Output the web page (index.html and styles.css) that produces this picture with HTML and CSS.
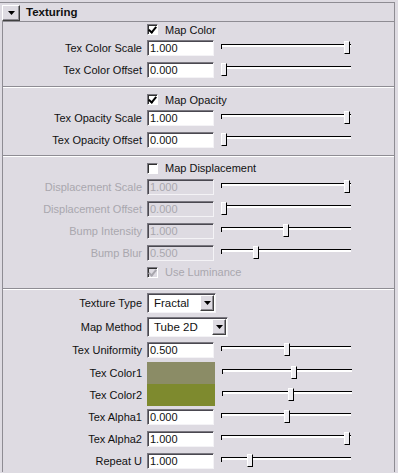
FILE: index.html
```html
<!DOCTYPE html>
<html>
<head>
    <title>Texturing</title>
    <link rel="stylesheet" href="styles.css">
</head>
<body>
    <div class="panel">
        <div class="header">
            <span class="toggle"><svg width="7" height="4" viewBox="0 0 7 4"><path d="M0 0H7L3.5 4Z" fill="#000"/></svg></span>
            <span class="title">Texturing</span>
        </div>

        <div class="frame">
            <div class="group g1">
                <div class="check-row">
                    <span class="check on"></span><span>Map Color</span>
                </div>
                <div class="row">
                    <label>Tex Color Scale</label>
                    <span class="field">1.000</span>
                    <span class="slider"><i class="thumb" style="left: 123px"></i></span>
                </div>
                <div class="row">
                    <label>Tex Color Offset</label>
                    <span class="field">0.000</span>
                    <span class="slider"><i class="thumb" style="left: 0px"></i></span>
                </div>
            </div>

            <div class="group g2">
                <div class="check-row">
                    <span class="check on"></span><span>Map Opacity</span>
                </div>
                <div class="row">
                    <label>Tex Opacity Scale</label>
                    <span class="field">1.000</span>
                    <span class="slider"><i class="thumb" style="left: 123px"></i></span>
                </div>
                <div class="row">
                    <label>Tex Opacity Offset</label>
                    <span class="field">0.000</span>
                    <span class="slider"><i class="thumb" style="left: 0px"></i></span>
                </div>
            </div>

            <div class="group g3">
                <div class="check-row tall">
                    <span class="check"></span><span>Map Displacement</span>
                </div>
                <div class="row off">
                    <label>Displacement Scale</label>
                    <span class="field">1.000</span>
                    <span class="slider"><i class="thumb" style="left: 123px"></i></span>
                </div>
                <div class="row off">
                    <label>Displacement Offset</label>
                    <span class="field">0.000</span>
                    <span class="slider"><i class="thumb" style="left: 0px"></i></span>
                </div>
                <div class="row off">
                    <label>Bump Intensity</label>
                    <span class="field">1.000</span>
                    <span class="slider"><i class="thumb" style="left: 62px"></i></span>
                </div>
                <div class="row off">
                    <label>Bump Blur</label>
                    <span class="field">0.500</span>
                    <span class="slider"><i class="thumb" style="left: 32px"></i></span>
                </div>
                <div class="check-row tall off">
                    <span class="check on"></span><span>Use Luminance</span>
                </div>
            </div>

            <div class="group g4">
                <div class="row h24">
                    <label>Texture Type</label>
                    <span class="select"><span>Fractal</span><span class="arrow"><svg width="7" height="4" viewBox="0 0 7 4"><path d="M0 0H7L3.5 4Z" fill="#000"/></svg></span></span>
                </div>
                <div class="row h23">
                    <label>Map Method</label>
                    <span class="select wide"><span>Tube 2D</span><span class="arrow"><svg width="7" height="4" viewBox="0 0 7 4"><path d="M0 0H7L3.5 4Z" fill="#000"/></svg></span></span>
                </div>
                <div class="row h23">
                    <label>Tex Uniformity</label>
                    <span class="field">0.500</span>
                    <span class="slider"><i class="thumb" style="left: 63px"></i></span>
                </div>
                <div class="row h23">
                    <label>Tex Color1</label>
                    <span class="swatch" style="background: #8b8c66"></span>
                    <span class="slider"><i class="thumb" style="left: 69px"></i></span>
                </div>
                <div class="row">
                    <label>Tex Color2</label>
                    <span class="swatch" style="background: #7e8a2e"></span>
                    <span class="slider"><i class="thumb" style="left: 66px"></i></span>
                </div>
                <div class="row">
                    <label>Tex Alpha1</label>
                    <span class="field">0.000</span>
                    <span class="slider"><i class="thumb" style="left: 63px"></i></span>
                </div>
                <div class="row">
                    <label>Tex Alpha2</label>
                    <span class="field">1.000</span>
                    <span class="slider"><i class="thumb" style="left: 123px"></i></span>
                </div>
                <div class="row">
                    <label>Repeat U</label>
                    <span class="field">1.000</span>
                    <span class="slider"><i class="thumb" style="left: 26px"></i></span>
                </div>
            </div>
        </div>
    </div>
</body>
</html>
```

FILE: styles.css
```css
body {
    margin: 0;
    background-color: #dedbe2;
    font-family: "Liberation Sans", Arial, sans-serif;
    font-size: 11px;
    color: #111;
    overflow: hidden;
}

.panel {
    margin-top: 2px;
    width: 394px;
    border-top: 1px solid #8e8c93;
    border-right: 1px solid #8e8c93;
}

.header {
    height: 18px;
    display: flex;
    align-items: center;
    padding-left: 2px;
}

.toggle {
    width: 16px;
    height: 14px;
    margin-top: 2px;
    display: flex;
    align-items: center;
    justify-content: center;
    border: 1px solid;
    border-color: #fff #404040 #404040 #fff;
    box-shadow: inset -1px -1px #8e8c93;
}

.title {
    margin-left: 6px;
    font-size: 11.5px;
    font-weight: bold;
}

.frame {
    margin-left: 2px;
    border-top: 1px solid #8e8c93;
    border-left: 1px solid #8e8c93;
}

.group {
    border-bottom: 1px solid #8e8c93;
    box-shadow: 0 1px #fff;
    margin-bottom: 1px;
}

.g1 { padding: 0 0 5px; }
.g2 { padding: 4px 0 4px; }
.g3 { padding: 3px 0 8px; }
.g4 { padding: 1px 0 0; border-bottom: none; box-shadow: none; }

.check-row {
    height: 15px;
    display: flex;
    align-items: center;
    padding-left: 144px;
}

.check-row.tall {
    height: 16px;
}

.check {
    width: 9px;
    height: 9px;
    margin-right: 7px;
    background: #fff;
    border: 1px solid;
    border-color: #7a7880 #fff #fff #7a7880;
    box-shadow: inset 1px 1px #303030;
    position: relative;
}

.check.on::after {
    content: '';
    position: absolute;
    left: 2px;
    top: 0px;
    width: 3px;
    height: 6px;
    border: solid #000;
    border-width: 0 2px 2px 0;
    transform: rotate(40deg);
}

.row {
    height: 22px;
    display: flex;
    align-items: center;
}

.row.h23 { height: 23px; }
.row.h24 { height: 24px; }

.row label {
    width: 139px;
    margin-right: 5px;
    text-align: right;
    white-space: nowrap;
}

.field {
    width: 63px;
    height: 14px;
    line-height: 14px;
    padding-left: 2px;
    background: #fff;
    border: 1px solid;
    border-color: #7a7880 #f4f3f6 #f4f3f6 #7a7880;
    box-shadow: inset 1px 1px #4a4850;
}

.swatch {
    width: 68px;
    height: 22px;
}

.slider {
    position: relative;
    width: 130px;
    height: 14px;
    margin-left: 7px;
}

.slider::before {
    content: '';
    position: absolute;
    left: 0;
    right: 0;
    top: 3px;
    height: 1px;
    background: #000;
    border-bottom: 2px solid #fff;
}

.slider::after {
    content: '';
    position: absolute;
    left: 0;
    top: 3px;
    width: 1px;
    height: 5px;
    background: #000;
}

.thumb {
    position: absolute;
    top: 0;
    width: 4px;
    height: 11px;
    background: #eeedf1;
    border: 1px solid;
    border-color: #fff #000 #000 #fff;
    z-index: 1;
}

.off {
    color: #a9a7ae;
}

.off .field {
    background: #dedbe2;
    color: #a9a7ae;
}

.off .check {
    background: #dedbe2;
}

.off .check.on::after {
    border-color: #a9a7ae;
}

.select {
    width: 61px;
    height: 18px;
    padding-left: 6px;
    display: flex;
    align-items: center;
    justify-content: space-between;
    background: #fff;
    border: 1px solid;
    border-color: #7a7880 #f4f3f6 #f4f3f6 #7a7880;
    box-shadow: inset 1px 1px #4a4850;
    font-size: 11.5px;
}

.select.wide {
    width: 73px;
}

.arrow {
    width: 12px;
    height: 14px;
    margin-right: 1px;
    display: flex;
    align-items: center;
    justify-content: center;
    background: #dedbe2;
    border: 1px solid;
    border-color: #fff #404040 #404040 #fff;
    box-shadow: inset -1px -1px #8e8c93;
}
```
